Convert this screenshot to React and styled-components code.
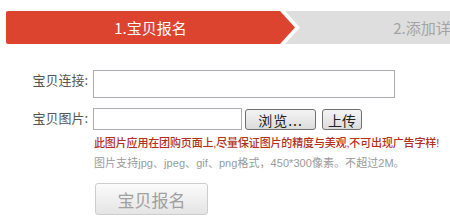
import React from 'react'
import styled, { createGlobalStyle } from 'styled-components'

const GlobalStyle = createGlobalStyle`
    html, body{
        margin:0;
        padding:0;
        background:#fff;
        overflow:hidden;
    }
    body{
        font-family: "Liberation Sans", "Noto Sans CJK SC", sans-serif;
    }
`

const Page = styled.div`
    width:450px;
    height:220px;
    overflow:hidden;
    padding-top:11px;
    box-sizing:border-box;
`

const Steps = styled.div`
    display:flex;
    padding-left:6px;
    height:33px;
    white-space:nowrap;
`

const Step = styled.div`
    flex:0 0 289px;
    height:33px;
    display:flex;
    align-items:center;
    justify-content:center;
    font-family: "Noto Sans CJK SC", sans-serif;
    font-size:15px;
    color:${p => p.active ? '#fff' : '#a3a3a3'};
    background:${p => p.active ? '#dc4430' : '#dedede'};
    border-radius:${p => p.active ? '2px 0 0 2px' : '0'};
    margin-left:${p => p.active ? '0' : '-10px'};
    clip-path:${p => p.active
        ? 'polygon(0 0, 274px 0, 100% 50%, 274px 100%, 0 100%)'
        : 'polygon(0 0, 100% 0, 100% 100%, 0 100%, 15px 50%)'};
`

const Form = styled.div`
    display:flex;
    flex-direction:column;
    margin-top:26px;
`

const Row = styled.div`
    display:flex;
    align-items:flex-start;
    gap:5px;
    & + &{
        margin-top:10px;
    }
`

const Label = styled.label`
    width:88px;
    text-align:right;
    font-family: "Noto Sans CJK SC", sans-serif;
    font-size:13px;
    line-height:20px;
    color:#555;
`

const Input = styled.input`
    box-sizing:border-box;
    width:${p => p.w}px;
    height:${p => p.h}px;
    border:1px solid #abadb3;
    background:#fff;
    margin:0;
    padding:0 4px;
    outline:none;
`

const FileButton = styled.button`
    box-sizing:border-box;
    height:21px;
    width:${p => p.w}px;
    margin:1px 0 0 ${p => p.gap}px;
    padding:0;
    border:1px solid #707070;
    border-radius:3px;
    background:linear-gradient(#f4f4f4, #dcdcdc);
    font-family: "Noto Sans CJK SC", sans-serif;
    font-size:14px;
    line-height:18px;
    color:#222;
    letter-spacing:${p => p.spacing || 0}px;
`

const Hints = styled.div`
    padding-left:94px;
    margin-top:4px;
    white-space:nowrap;
`

const Hint = styled.p`
    margin:0;
    font-size:11px;
    line-height:18px;
    height:18px;
    color:${p => p.warn ? '#b0301c' : '#9a9a9a'};
    font-weight:${p => p.warn ? 500 : 400};
    letter-spacing:${p => p.warn ? '-0.15px' : '0.05px'};
    & + &{
        margin-top:2px;
    }
`

const Submit = styled.button`
    box-sizing:border-box;
    width:113px;
    height:32px;
    margin:11px 0 0 95px;
    border:1px solid #cdcdcd;
    border-radius:3px;
    background:linear-gradient(#fbfbfb, #e4e4e4);
    font-family: "Noto Sans CJK SC", sans-serif;
    font-size:17px;
    color:#a0a0a0;
    padding:0;
`

export default function App() {
    return (
        <Page>
            <GlobalStyle/>
            <Steps>
                <Step active>1.宝贝报名</Step>
                <Step>2.添加详情</Step>
            </Steps>
            <Form>
                <Row>
                    <Label>宝贝连接:</Label>
                    <Input w={302} h={28}/>
                </Row>
                <Row>
                    <Label>宝贝图片:</Label>
                    <Input w={149} h={22}/>
                    <FileButton w={71} gap={-2} spacing={1}>浏览...</FileButton>
                    <FileButton w={40} gap={1}>上传</FileButton>
                </Row>
            </Form>
            <Hints>
                <Hint warn>此图片应用在团购页面上,尽量保证图片的精度与美观,不可出现广告字样!</Hint>
                <Hint>图片支持jpg、jpeg、gif、png格式，450*300像素。不超过2M。</Hint>
            </Hints>
            <Submit>宝贝报名</Submit>
        </Page>
    )
}
